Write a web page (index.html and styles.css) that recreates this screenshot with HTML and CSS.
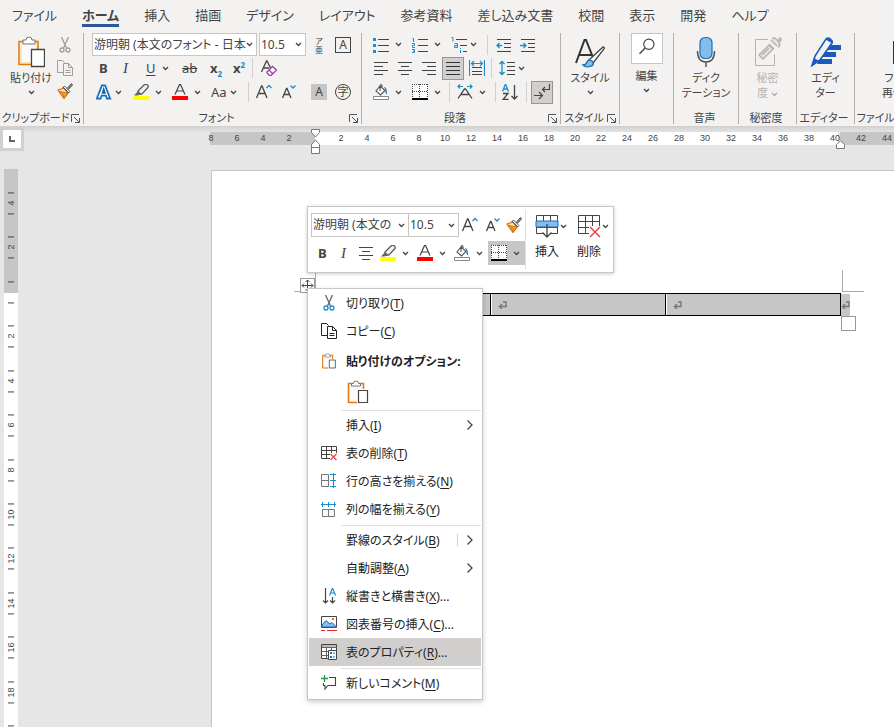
FILE: index.html
```html
<!DOCTYPE html>
<html lang="ja">
<head>
    <meta charset="UTF-8">
    <meta name="viewport" content="width=device-width, initial-scale=1.0">
    <title>文書 - 表のプロパティ</title>
    <link rel="stylesheet" href="styles.css">
</head>
<body>
    <!-- アイコン定義 -->
    <svg class="defs" width="0" height="0" aria-hidden="true">
        <symbol id="chev" viewBox="0 0 7 5"><path d="M1 1l2.500 2.500L6 1" fill="none" stroke="#444" stroke-width="1.300"/></symbol>
        <symbol id="arrow" viewBox="0 0 8 12"><path d="M1.500 1.500L6 6l-4.500 4.500" fill="none" stroke="#444" stroke-width="1.300"/></symbol>
        <symbol id="launch" viewBox="0 0 9 9"><path d="M.5 8V.5H8M3 3l5 5M8.500 4v4.500H4" fill="none" stroke="#555"/></symbol>
        <symbol id="cut" viewBox="0 0 16 16"><path d="M4.500 0l5 11M11.500 0l-5 11" fill="none" stroke="currentColor" stroke-width="1.300"/><circle class="ring" cx="5" cy="13" r="2"/><circle class="ring" cx="11" cy="13" r="2"/></symbol>
        <symbol id="copy" viewBox="0 0 16 16"><path d="M6 12.500H.5V.5h5l2 2M6.500 3.500h5l4 4v8h-9zM11.500 3.500v4h4M8.500 10.500h5M8.500 12.500h5" fill="none" stroke="currentColor"/></symbol>
        <symbol id="brush" viewBox="0 0 16 16"><path d="M1 7l6-2 4 5-4 5.500z" fill="#fbe3b5" stroke="#d9720f" stroke-width="1.300"/><path d="M2 8.500l3 1 2 5.500 4-5z" fill="#f59b2e" stroke="#d9720f"/><path d="M6 4l6 6M7.500 3l5.500 5.500-1.500 1.500L6 4.500z" fill="#fff" stroke="#555"/><path d="M10 5.500l4.500-5 1.200 1.200-4.500 5" fill="#888" stroke="#555"/></symbol>
        <symbol id="marker" viewBox="0 0 16 16"><path d="M5 7l6-6q2-1.500 3.500 0t0 3L9 10l-4 .500z" fill="#eee" stroke="#555" stroke-width="1.200"/><path d="M5 7l4 3-5 1.500H1z" fill="#666"/><path d="M0 12h16v4H0z" fill="#ff0"/></symbol>
        <symbol id="fontcolor" viewBox="0 0 16 16"><path d="M3 10.500L7.500.500h1l4.500 10M4.500 7h7" fill="none" stroke="#444" stroke-width="1.200"/><path d="M0 12h16v4H0z" fill="red"/></symbol>
        <symbol id="bucket" viewBox="0 0 16 16"><path d="M7 2l5 4.500L7.500 11 3 7zM7 7V1.500q1-2 2 0V3" fill="#fff" stroke="#555" stroke-width="1.100"/><path d="M11 3q3 0 3 7-2 0-1.500-4z" fill="#1e6fb8"/><path d="M.5 12.500h15v3H.5z" fill="#fff" stroke="#888"/></symbol>
        <symbol id="borders" viewBox="0 0 16 16"><path d="M0 0h16v16H0z" fill="#fff"/><path d="M0 .500h16M0 7.500h16M.500 0v14M7.500 0v14M15.500 0v14" fill="none" stroke="#444" stroke-dasharray="1 1"/><path d="M0 15h16" stroke="#000" stroke-width="2"/></symbol>
        <symbol id="grow" viewBox="0 0 16 16"><path d="M.5 14L5.500 2h.500l5 12M2.500 9.500h7" fill="none" stroke="#444" stroke-width="1.300"/><path d="M10.500 4l2.500-2.500L15.500 4" fill="none" stroke="#1e8bcd" stroke-width="1.300"/></symbol>
        <symbol id="shrink" viewBox="0 0 16 16"><path d="M1.500 14L5.500 4.500h.500l4 9.500M3 10.500h6" fill="none" stroke="#444" stroke-width="1.300"/><path d="M9.500 1.500L12 4l2.500-2.500" fill="none" stroke="#1e8bcd" stroke-width="1.300"/></symbol>
        <symbol id="center" viewBox="0 0 16 16"><path d="M1 2.500h14M4 6.500h8M1 10.500h14M4 14.500h8" stroke="#444"/></symbol>
        <symbol id="paste" viewBox="0 0 28 32"><path d="M2 5.500h19v23H2z" fill="#fde6b8" stroke="#e07b14" stroke-width="1.500"/><path d="M5 8h14v18H5z" fill="#fafafa"/><path d="M6 8V4h3q0-3 3-3t3 3h3v4z" fill="#fff" stroke="#777"/><path d="M14.500 13.500h13v17h-13z" fill="#fff" stroke="#444" stroke-width="1.300"/></symbol>
        <symbol id="paste-sm" viewBox="0 0 22 24"><path d="M1.500 3.500h15v19h-15z" fill="#fafafa" stroke="#e07b14" stroke-width="1.600"/><path d="M4.500 6V3.500h2q0-2.500 2.500-2.500t2.500 2.500h2V6z" fill="#fff" stroke="#777"/><path d="M10 9h12v15H10z" fill="#fff"/><path d="M11.500 10.500h9v12h-9z" fill="#fff" stroke="#444" stroke-width="1.200"/></symbol>
        <symbol id="ret" viewBox="0 0 9 8"><path d="M5 1h3v4.500H2M4 3L1.500 5.500 4 8" fill="none" stroke="#777" stroke-width="1.400"/></symbol>
    </svg>

    <header class="ribbon">
        <nav class="tabs">
            <a href="#">ファイル</a>
            <a href="#" class="active">ホーム</a>
            <a href="#">挿入</a>
            <a href="#">描画</a>
            <a href="#">デザイン</a>
            <a href="#">レイアウト</a>
            <a href="#">参考資料</a>
            <a href="#">差し込み文書</a>
            <a href="#">校閲</a>
            <a href="#">表示</a>
            <a href="#">開発</a>
            <a href="#">ヘルプ</a>
        </nav>

        <div class="groups">
            <!-- クリップボード -->
            <section class="group clipboard">
                <div class="group-body clip-body">
                    <button class="big"><svg width="28" height="32"><use href="#paste"/></svg><span>貼り付け</span><svg class="chev"><use href="#chev"/></svg></button>
                    <div class="clip-tools">
                        <button class="muted" aria-label="切り取り"><svg class="icon"><use href="#cut"/></svg></button>
                        <button class="muted" aria-label="コピー"><svg class="icon"><use href="#copy"/></svg></button>
                        <button aria-label="書式のコピー"><svg class="icon"><use href="#brush"/></svg></button>
                    </div>
                </div>
                <div class="group-label"><span>クリップボード</span><svg class="launch"><use href="#launch"/></svg></div>
            </section>

            <!-- フォント -->
            <section class="group font">
                <div class="group-body">
                    <div class="row row-top font-row1">
                        <div class="combo">
                            <select aria-label="フォント"><option>游明朝 (本文のフォント - 日本</option></select>
                            <svg class="chev"><use href="#chev"/></svg>
                        </div>
                        <div class="combo">
                            <select aria-label="フォント サイズ"><option>10.5</option></select>
                            <svg class="chev"><use href="#chev"/></svg>
                        </div>
                        <button class="ruby" aria-label="ルビ"><span>ア</span><span>亜</span></button>
                        <button class="boxed" aria-label="囲み線">A</button>
                    </div>
                    <div class="row font-row2">
                        <button class="char bold">B</button>
                        <button class="char italic">I</button>
                        <button class="split wide"><span class="char under">U</span><svg class="chev"><use href="#chev"/></svg></button>
                        <button class="char strike">ab</button>
                        <button class="char bold">x<sub>2</sub></button>
                        <button class="char bold">x<sup>2</sup></button>
                        <i class="vline"></i>
                        <button aria-label="書式のクリア"><svg class="icon" viewBox="0 0 16 16"><path d="M.5 12L5.500 1H6l4 8M2.500 8H8" fill="none" stroke="#444" stroke-width="1.300"/><path d="M6 12l5.500-5.500 4 3.500L10 15.500H8.500L6 13zM8 10l4 4" fill="#fff" stroke="#9b3fa8" stroke-width="1.300"/></svg></button>
                    </div>
                    <div class="row font-row3">
                        <button class="split"><svg class="icon" viewBox="0 0 16 16"><path d="M1 14.500L6 1.500h3L14 14.500h-3l-1-3H5.500l-1 3zM6.500 9h2.500L7.700 5z" fill="#fff" stroke="#a5d1f0" stroke-width="3"/><path d="M1 14.500L6 1.500h3L14 14.500h-3l-1-3H5.500l-1 3zM6.500 9h2.500L7.700 5z" fill="#fff" stroke="#1664ae" stroke-width="1.500"/></svg><svg class="chev"><use href="#chev"/></svg></button>
                        <button class="split wide"><svg class="icon"><use href="#marker"/></svg><svg class="chev"><use href="#chev"/></svg></button>
                        <button class="split wide"><svg class="icon"><use href="#fontcolor"/></svg><svg class="chev"><use href="#chev"/></svg></button>
                        <button class="split"><span class="char">Aa</span><svg class="chev"><use href="#chev"/></svg></button>
                        <i class="vline"></i>
                        <button aria-label="フォントの拡大"><svg class="icon"><use href="#grow"/></svg></button>
                        <button aria-label="フォントの縮小"><svg class="icon"><use href="#shrink"/></svg></button>
                        <button class="shaded">A</button>
                        <button class="circled">字</button>
                    </div>
                </div>
                <div class="group-label"><span>フォント</span><svg class="launch"><use href="#launch"/></svg></div>
            </section>

            <!-- 段落 -->
            <section class="group para">
                <div class="group-body">
                    <div class="row row-top para-row1">
                        <button class="split wide"><svg class="icon" viewBox="0 0 16 16"><path d="M0 1h3v3H0zM0 7h3v3H0zM0 13h3v3H0z" fill="#1e8bcd"/><path d="M5 2.500h11M5 8.500h11M5 14.500h11" stroke="#444"/></svg><svg class="chev"><use href="#chev"/></svg></button>
                        <button class="split wide"><svg class="icon" viewBox="0 0 16 16"><path d="M6 2.500h10M6 8.500h10M6 14.500h10" stroke="#444"/><path d="M.5 1.500h1v3.500M0 6.500h2.500v2H.500v2H3M0 12.500h2.500v3H0M1 14h1.500" fill="none" stroke="#1e8bcd"/></svg><svg class="chev"><use href="#chev"/></svg></button>
                        <button class="split"><svg class="icon" viewBox="0 0 16 16"><path d="M5 2.500h11M9 8.500h7M12 14.500h4" stroke="#444"/><path d="M.5.500h1.500v4M3.500 6.500h3v4h-3v-2h3M9.500 11v1M9.500 13v3" fill="none" stroke="#1e8bcd"/></svg><svg class="chev"><use href="#chev"/></svg></button>
                        <i class="vline"></i>
                        <button aria-label="インデントを減らす"><svg class="icon" viewBox="0 0 16 16"><path d="M1 2.500h14M8 6.500h7M8 10.500h7M1 14.500h14" stroke="#444"/><path d="M6 8.500H1M3.500 6L1 8.500 3.500 11" fill="none" stroke="#1e8bcd" stroke-width="1.300"/></svg></button>
                        <button aria-label="インデントを増やす"><svg class="icon" viewBox="0 0 16 16"><path d="M1 2.500h14M8 6.500h7M8 10.500h7M1 14.500h14" stroke="#444"/><path d="M0 8.500h6M3.500 6L6 8.500 3.500 11" fill="none" stroke="#1e8bcd" stroke-width="1.300"/></svg></button>
                    </div>
                    <div class="row para-row2">
                        <button aria-label="左揃え"><svg class="icon" viewBox="0 0 16 16"><path d="M1 2.500h14M1 6.500h9M1 10.500h14M1 14.500h9" stroke="#444"/></svg></button>
                        <button aria-label="中央揃え"><svg class="icon"><use href="#center"/></svg></button>
                        <button aria-label="右揃え"><svg class="icon" viewBox="0 0 16 16"><path d="M1 2.500h14M6 6.500h9M1 10.500h14M6 14.500h9" stroke="#444"/></svg></button>
                        <button class="pressed" aria-label="両端揃え"><svg class="icon" viewBox="0 0 16 16"><path d="M1 2.500h14M1 6.500h14M1 10.500h14M1 14.500h14" stroke="#333"/></svg></button>
                        <button aria-label="均等割り付け"><svg class="icon" viewBox="0 0 16 16"><path d="M.5 0v16M15.500 0v16M2 3.500h12M5 1L2.500 3.500 5 6M11 1l2.500 2.500L11 6" fill="none" stroke="#1e8bcd" stroke-width="1.200"/><path d="M3 7.500h10M3 11.500h10M3 14.500h10" stroke="#444"/></svg></button>
                        <i class="vline"></i>
                        <button class="split"><svg class="icon" viewBox="0 0 16 16"><path d="M3 1v14M.5 4L3 1.500 5.500 4M.5 12L3 14.500 5.500 12" fill="none" stroke="#1e8bcd" stroke-width="1.300"/><path d="M8 2.500h8M8 6.500h8M8 10.500h8M8 14.500h8" stroke="#444"/></svg><svg class="chev"><use href="#chev"/></svg></button>
                    </div>
                    <div class="row para-row3">
                        <button class="split wide"><svg class="icon"><use href="#bucket"/></svg><svg class="chev"><use href="#chev"/></svg></button>
                        <button class="split wide"><svg class="icon"><use href="#borders"/></svg><svg class="chev"><use href="#chev"/></svg></button>
                        <i class="vline"></i>
                        <button class="split wide"><svg class="icon" viewBox="0 0 16 16"><path d="M1 14.500L7.500 5h1L15 14.500M4 10.500h8" fill="none" stroke="#444" stroke-width="1.300"/><path d="M6 2.500H1M3 .500l-2 2 2 2M10 2.500h5M13 .500l2 2-2 2" fill="none" stroke="#1e8bcd" stroke-width="1.200"/></svg><svg class="chev"><use href="#chev"/></svg></button>
                        <i class="vline"></i>
                        <button aria-label="並べ替え"><svg class="icon" viewBox="0 0 16 16"><path d="M.5 7.500L3.300.500h.400L6.500 7.500M1.500 5h4" fill="none" stroke="#1e8bcd" stroke-width="1.300"/><path d="M1 9.500h5L1 15.500h5.500M12.500 1v14M9.500 12l3 3 3-3" fill="none" stroke="#444" stroke-width="1.300"/></svg></button>
                        <i class="vline"></i>
                        <button class="pressed" aria-label="編集記号の表示"><svg class="icon" viewBox="0 0 16 16"><path d="M15.500 0v5.500H9M11 3L8.500 5.500 11 8M0 11.500h8M5 8l3.500 3.500L5 15" fill="none" stroke="#444" stroke-width="1.200"/></svg></button>
                    </div>
                </div>
                <div class="group-label"><span>段落</span><svg class="launch"><use href="#launch"/></svg></div>
            </section>

            <!-- スタイル -->
            <section class="group style">
                <div class="group-body">
                    <button class="big"><svg width="30" height="32" viewBox="0 0 30 32"><path d="M1 27L9.500 4h1.500l8 20M4.500 19h13" fill="none" stroke="#333" stroke-width="2"/><path d="M14 24L28 11q2 0 1 2L18 27z" fill="#fff" stroke="#444" stroke-width="1.300"/><path d="M8 29q3 0 4-3t5-1q3 4-1 5-5 2-8-1z" fill="#83bdec" stroke="#1e6fb8" stroke-width="1.300"/></svg><span>スタイル</span><svg class="chev"><use href="#chev"/></svg></button>
                </div>
                <div class="group-label"><span>スタイル</span><svg class="launch"><use href="#launch"/></svg></div>
            </section>

            <!-- 編集 -->
            <section class="group edit">
                <div class="group-body">
                    <button class="big"><svg class="edit-icon" width="32" height="31" viewBox="0 0 32 31"><circle cx="18" cy="11" r="5.500" fill="none" stroke="#444" stroke-width="1.300"/><path d="M14 15l-6 6" stroke="#444" stroke-width="1.500"/></svg><span>編集</span><svg class="chev"><use href="#chev"/></svg></button>
                </div>
            </section>

            <!-- 音声 -->
            <section class="group voice">
                <div class="group-body">
                    <button class="big"><svg width="20" height="32" viewBox="0 0 20 32"><rect x="4" y="1.500" width="12" height="21" rx="5" fill="#83bdec" stroke="#1e6fb8" stroke-width="1.200"/><path d="M1.500 15q0 11 8.500 11t8.500-11M10 26v5" fill="none" stroke="#555" stroke-width="1.500"/></svg><span>ディク<br>テーション</span></button>
                </div>
                <div class="group-label"><span>音声</span></div>
            </section>

            <!-- 秘密度 -->
            <section class="group secret">
                <div class="group-body">
                    <button class="big" disabled><svg width="28" height="32" viewBox="0 0 28 32"><path d="M14 3.500H1.500v26h19V18" fill="none" stroke="#b5b3b1"/><path d="M5 19L15 9l4 4L9 23zM8 19l7-7M15 8l5 5M17 4l6 6M18 3q2-2 4 0l2 2 2-3 1.500 1.500-2.500 3q2 3-1 5" fill="#e8e6e4" stroke="#b5b3b1" stroke-width="1.500"/></svg><span>秘密<br>度 <svg class="chev dim"><use href="#chev"/></svg></span></button>
                </div>
                <div class="group-label"><span>秘密度</span></div>
            </section>

            <!-- エディター -->
            <section class="group editor">
                <div class="group-body">
                    <button class="big"><svg width="32" height="32" viewBox="0 0 32 32"><path d="M19 9h12v5H17zM15 16h11v5H12zM10 23h12v5H7z" fill="#185abd"/><path d="M2 29.500L5 20 16 3q2-2 4.500 0t1.500 4L10 24z" fill="#f3f2f1" stroke="#185abd" stroke-width="1.600"/><path d="M1.500 30.500L4 22l5 3zM15.500 3.500q2-2 5 0t2 4z" fill="#185abd"/></svg><span>エディ<br>ター</span></button>
                </div>
                <div class="group-label"><span>エディター</span></div>
            </section>

            <!-- ファイルの再使用 -->
            <section class="group reuse">
                <div class="group-body">
                    <button class="big"><svg width="32" height="32" viewBox="0 0 32 32"><path d="M1 6h12l7 6v15H1z" fill="#fff" stroke="#333" stroke-width="2"/></svg><span>ファイルを<br>再使用する</span></button>
                </div>
                <div class="group-label"><span>ファイルを再使用する</span></div>
            </section>
        </div>
    </header>

    <main class="workspace">
        <!-- 水平ルーラー -->
        <div class="top-strip">
            <button class="tab-stop" aria-label="左揃えタブ"><svg width="8" height="8" viewBox="0 0 8 8"><path d="M2 1v5h5" fill="none" stroke="#666" stroke-width="2"/></svg></button>
            <div class="hruler">
                <ol>
                    <li>8</li><li>6</li><li>4</li><li>2</li><li></li><li>2</li><li>4</li><li>6</li><li>8</li><li>10</li><li>12</li><li>14</li><li>16</li><li>18</li><li>20</li><li>22</li><li>24</li><li>26</li><li>28</li><li>30</li><li>32</li><li>34</li><li>36</li><li>38</li><li>40</li><li>42</li><li>44</li>
                </ol>
                <svg class="indent-left" width="9" height="26" viewBox="0 0 9 26"><path d="M.5.500h8v3L4.500 8l-4-4.500zM4.500 11l4 4.500v3h-8v-3zM.5 18.500h8v6h-8z" fill="#fff" stroke="#777"/></svg>
                <svg class="indent-right" width="9" height="9" viewBox="0 0 9 9"><path d="M4.500.800l4 3.700v4h-8v-4z" fill="#fff" stroke="#777"/></svg>
            </div>
        </div>

        <div class="canvas">
            <!-- 垂直ルーラー -->
            <div class="vruler">
                <ol>
                    <li>4</li><li>2</li><li></li><li>2</li><li>4</li><li>6</li><li>8</li><li>10</li><li>12</li><li>14</li><li>16</li><li>18</li><li></li><li></li>
                </ol>
            </div>

            <div class="page">
                <i class="corner corner-left"></i>
                <i class="corner corner-right"></i>
                <div class="table-line">
                    <table class="doc-table">
                        <tr>
                            <td><svg class="ret"><use href="#ret"/></svg></td>
                            <td><svg class="ret"><use href="#ret"/></svg></td>
                            <td><svg class="ret"><use href="#ret"/></svg></td>
                        </tr>
                    </table>
                    <span class="row-end"><svg class="ret"><use href="#ret"/></svg></span>
                    <i class="resize-handle"></i>
                </div>
                <svg class="move-handle" width="15" height="15" viewBox="0 0 15 15"><path d="M.5.500h14v14H.5z" fill="#fff" stroke="#999"/><path d="M7.500 2v11M2 7.500h11M5.500 4l2-2 2 2M5.500 11l2 2 2-2M4 5.500l-2 2 2 2M11 5.500l2 2-2 2" fill="none" stroke="#444"/></svg>

                <!-- ミニ ツールバー -->
                <div class="mini-bar">
                    <div class="mini-main">
                        <div class="mini-row mini-row1">
                            <div class="combo">
                                <select aria-label="フォント"><option>游明朝 (本文の</option></select>
                                <svg class="chev"><use href="#chev"/></svg>
                            </div>
                            <div class="combo">
                                <select aria-label="フォント サイズ"><option>10.5</option></select>
                                <svg class="chev"><use href="#chev"/></svg>
                            </div>
                            <button aria-label="フォントの拡大"><svg class="icon"><use href="#grow"/></svg></button>
                            <button aria-label="フォントの縮小"><svg class="icon"><use href="#shrink"/></svg></button>
                            <button aria-label="書式のコピー"><svg class="icon"><use href="#brush"/></svg></button>
                        </div>
                        <div class="mini-row mini-row2">
                            <button class="char bold">B</button>
                            <button class="char italic">I</button>
                            <button aria-label="中央揃え"><svg class="icon"><use href="#center"/></svg></button>
                            <button class="split wide"><svg class="icon"><use href="#marker"/></svg><svg class="chev"><use href="#chev"/></svg></button>
                            <button class="split wide"><svg class="icon"><use href="#fontcolor"/></svg><svg class="chev"><use href="#chev"/></svg></button>
                            <button class="split wide"><svg class="icon"><use href="#bucket"/></svg><svg class="chev"><use href="#chev"/></svg></button>
                            <button class="split wide hot"><svg class="icon"><use href="#borders"/></svg><svg class="chev"><use href="#chev"/></svg></button>
                        </div>
                    </div>
                    <div class="mini-side">
                        <button><span class="mini-pic"><svg width="24" height="24" viewBox="0 0 24 24"><path d="M1.500 1.500h21v18h-21zM1.500 7.500h21M1.500 13.500h21M8.500 1.500v18M15.500 1.500v18" fill="#fff" stroke="#444"/><path d="M1 7h22v6H1z" fill="#83bdec" stroke="#1e6fb8"/><path d="M8 14h8v9H8z" fill="#fff"/><path d="M12 10v13M7.500 18.500L12 23l4.500-4.500" fill="none" stroke="#444" stroke-width="1.300"/></svg><svg class="chev"><use href="#chev"/></svg></span><span>挿入</span></button>
                        <button><span class="mini-pic"><svg width="24" height="24" viewBox="0 0 24 24"><path d="M1.500 1.500h21v18h-21zM1.500 7.500h21M1.500 13.500h21M8.500 1.500v18M15.500 1.500v18" fill="#fff" stroke="#444"/><path d="M12 12h12v12H12z" fill="#fff"/><path d="M13 13l10 10M23 13L13 23" stroke="#e8484d" stroke-width="1.500"/></svg><svg class="chev"><use href="#chev"/></svg></span><span>削除</span></button>
                    </div>
                </div>

                <!-- コンテキスト メニュー -->
                <div class="menu">
                    <button class="item"><svg class="icon blue-ring"><use href="#cut"/></svg><span>切り取り(<u>T</u>)</span></button>
                    <button class="item"><svg class="icon"><use href="#copy"/></svg><span>コピー(<u>C</u>)</span></button>
                    <div class="item heading"><svg class="icon"><use href="#paste-sm"/></svg><span>貼り付けのオプション:</span></div>
                    <div class="paste-options"><button aria-label="貼り付け"><svg width="22" height="24"><use href="#paste-sm"/></svg></button></div>
                    <hr>
                    <button class="item"><i class="icon"></i><span>挿入(<u>I</u>)</span><svg class="arrow"><use href="#arrow"/></svg></button>
                    <button class="item"><svg class="icon" viewBox="0 0 16 16"><path d="M.5 1.500h15v12H.5zM.500 5.500h15M.500 9.500h15M5.500 1.500v12M10.500 1.500v12" fill="#fff" stroke="#444"/><path d="M9 8h7v8H9z" fill="#fff"/><path d="M9.500 9l6 6M15.500 9l-6 6" stroke="#e8484d" stroke-width="1.300"/></svg><span>表の削除(<u>T</u>)</span></button>
                    <button class="item"><svg class="icon" viewBox="0 0 16 16"><path d="M.5 1.500h7v12h-7zM.500 7.500h7" fill="#fafafa" stroke="#777"/><path d="M12.500 0v15M9 1.500h6M9 7.500h6M9 13.500h6" stroke="#1e8bcd"/></svg><span>行の高さを揃える(<u>N</u>)</span></button>
                    <button class="item"><svg class="icon" viewBox="0 0 16 16"><path d="M1.500 8.500h12v7h-12zM7.500 8.500v7" fill="#fafafa" stroke="#777"/><path d="M0 3.500h15M1.500 1v5M7.500 1v5M13.500 1v5" stroke="#1e8bcd"/></svg><span>列の幅を揃える(<u>Y</u>)</span></button>
                    <hr>
                    <button class="item"><i class="icon"></i><span>罫線のスタイル(<u>B</u>)</span><svg class="arrow divided"><use href="#arrow"/></svg></button>
                    <button class="item"><i class="icon"></i><span>自動調整(<u>A</u>)</span><svg class="arrow"><use href="#arrow"/></svg></button>
                    <button class="item"><svg class="icon" viewBox="0 0 16 16"><path d="M4.500 0v15M2 12.500L4.500 15 7 12.500M11.500 9v6M9 12.500l2.500 2.500 2.500-2.500" fill="none" stroke="#444" stroke-width="1.200"/><path d="M8.500 7.500l2.800-7h.400l2.800 7M9.500 5h4" fill="none" stroke="#1e8bcd" stroke-width="1.200"/></svg><span>縦書きと横書き(<u>X</u>)...</span></button>
                    <button class="item"><svg class="icon" viewBox="0 0 16 16"><path d="M.5.500h15v11H.5z" fill="#fff" stroke="#444"/><path d="M1 9l4-4.500L9 8l2-1.500 4 4V11H1z" fill="#83bdec" stroke="#1e6fb8"/><path d="M11 2h2v2h-2z" fill="#e07b14"/><path d="M0 14.500h4M6 14.500h10" stroke="#e8282d"/></svg><span>図表番号の挿入(<u>C</u>)...</span></button>
                    <button class="item selected"><svg class="icon" viewBox="0 0 16 16"><path d="M.5.500h15v14H.5z" fill="#fff" stroke="#444"/><path d="M1 1h14v2H1z" fill="#bbb"/><path d="M.5 3.500h15M.5 7.500H7M.5 11.500H7M5.500 3.500v11M10.500 3.500v4" stroke="#666"/><path d="M7.500 6.500h8v9h-8z" fill="#fff" stroke="#444"/><path d="M9 8h2v2H9zM9 12h2v2H9zM12 8.500h2v1h-2zM12 12.500h2v1h-2z" fill="#1e6fb8"/></svg><span>表のプロパティ(<u>R</u>)...</span></button>
                    <hr>
                    <button class="item"><svg class="icon" viewBox="0 0 16 16"><path d="M8 2.500h6.500v8H7L4 14v-3.500H2.500V8" fill="none" stroke="#444" stroke-width="1.100"/><path d="M3.500 0v7M0 3.500h7" stroke="#1b9e4b" stroke-width="1.300"/></svg><span>新しいコメント(<u>M</u>)</span></button>
                </div>
            </div>
        </div>
    </main>
</body>
</html>
```

FILE: styles.css
```css
* {
    box-sizing: border-box;
}
body {
    margin: 0;
    min-height: 100vh;
    display: flex;
    flex-direction: column;
    overflow: hidden;
    font-family: "Noto Sans", "Noto Sans CJK JP", sans-serif;
    font-feature-settings: "palt";
    font-size: 12px;
    line-height: 16px;
    color: #444;
    background-color: #e6e6e6;
}
.defs {
    position: absolute;
}
svg {
    display: block;
    flex: none;
}
button {
    margin: 0;
    padding: 0;
    border: none;
    background: none;
    font: inherit;
    font-feature-settings: inherit;
    color: inherit;
    white-space: nowrap;
}
.icon {
    width: 16px;
    height: 16px;
    flex: none;
}
.chev {
    width: 7px;
    height: 5px;
}

/* リボン */
.ribbon {
    overflow: hidden;
    padding-bottom: 2px;
    border-bottom: 1px solid #d2d0ce;
    background-color: #f3f2f1;
}
.tabs {
    display: flex;
    gap: 25px;
    height: 33px;
    padding-left: 12px;
    font-size: 13px;
    line-height: 16px;
}
.tabs a {
    height: 27px;
    padding-top: 7px;
    color: #444;
    text-decoration: none;
    white-space: nowrap;
}
.tabs .active {
    border-bottom: 3px solid #2b579a;
    font-weight: bold;
}
.groups {
    display: flex;
}
.group {
    flex: none;
    display: flex;
    flex-direction: column;
    height: 91px;
    border-right: 1px solid #b3b0ad;
}
.group-body {
    height: 79px;
}
.group-label {
    display: flex;
    align-items: center;
    padding-right: 3px;
    font-size: 11px;
    line-height: 12px;
    white-space: nowrap;
}
.group-label span {
    flex: 1;
    text-align: center;
}
.launch {
    width: 9px;
    height: 9px;
}
.clipboard { width: 84px; }
.font { width: 278px; }
.para { width: 199px; }
.style { width: 59px; }
.edit { width: 54px; }
.voice { width: 65px; }
.secret { width: 58px; }
.editor { width: 58px; }
.reuse { width: 108px; }

.big {
    display: flex;
    flex-direction: column;
    align-items: center;
    width: 100%;
    padding-top: 3px;
    text-align: center;
}
.big > .chev {
    margin-top: 5px;
}
.big > span {
    font-size: 11px;
    line-height: 15px;
    padding-top: 2px;
}
.big:disabled {
    color: #b5b3b1;
}
.big .dim {
    display: inline-block;
    opacity: 0.4;
}
.edit .big {
    padding-top: 0;
}
.edit-icon {
    margin-bottom: 2px;
    border: 1px solid #c8c6c4;
    background-color: #fff;
}
.clip-body {
    display: flex;
}
.clip-body .big {
    width: 57px;
    padding-left: 5px;
}
.clip-tools {
    display: flex;
    flex-direction: column;
    gap: 7px;
    padding-top: 4px;
}
.muted {
    color: #a19f9d;
}
.ring {
    fill: none;
    stroke: var(--ring, currentColor);
    stroke-width: 1.3px;
}
.blue-ring {
    --ring: #1e8bcd;
    color: #666;
}

.row {
    display: grid;
    height: 24px;
    align-items: center;
    justify-items: start;
}
.row-top {
    height: 23px;
}
.font-row1 {
    grid-template-columns: 167px 52px 24px 16px;
    padding-left: 8px;
}
.font-row2 {
    grid-template-columns: 24px 23px 36px 28px 23px 19px 9px 16px;
    padding-left: 15px;
}
.font-row3 {
    grid-template-columns: 37px 39px 39px 37px 8px 25px 30px 24px 16px;
    padding-left: 12px;
}
.para-row1 {
    grid-template-columns: 39px 39px 36px 9px 24px 16px;
    padding-left: 11px;
}
.para-row2 {
    grid-template-columns: 24px 24px 21px 27px 22px 8px 30px;
    padding-left: 11px;
}
.para-row3 {
    grid-template-columns: 39px 37px 8px 38px 7px 24px 5px 22px;
    padding-left: 11px;
}
.vline {
    width: 1px;
    height: 20px;
    background-color: #d2d0ce;
}
.split {
    display: flex;
    align-items: center;
    gap: 3px;
}
.split.wide {
    gap: 6px;
}
.combo {
    display: grid;
    align-items: center;
    justify-items: end;
    height: 23px;
    border: 1px solid #c8c6c4;
    background-color: #fff;
}
.combo select {
    grid-area: 1 / 1;
    width: 100%;
    padding: 0 10px 0 1px;
    appearance: none;
    border: none;
    background: none;
    font: inherit;
    font-feature-settings: inherit;
    color: #444;
}
.combo .chev {
    grid-area: 1 / 1;
    margin-right: 3px;
    pointer-events: none;
}
.font-row1 .combo:nth-child(1) { width: 165px; }
.font-row1 .combo:nth-child(2) { width: 47px; }

.char {
    font-size: 13px;
    line-height: 16px;
}
.bold {
    font-weight: bold;
}
.italic {
    font-family: "Liberation Serif", serif;
    font-size: 15px;
    font-style: italic;
}
.under {
    text-decoration: underline;
    text-underline-offset: 2px;
}
.strike {
    text-decoration: line-through;
}
.char sub,
.char sup {
    font-size: 8px;
    line-height: 0;
    color: #1e8bcd;
}
.ruby {
    display: flex;
    flex-direction: column;
    align-items: center;
    width: 16px;
    font-size: 8px;
    line-height: 9px;
}
.boxed,
.shaded,
.circled {
    width: 16px;
    height: 16px;
    line-height: 14px;
    text-align: center;
}
.boxed {
    border: 1px solid #444;
}
.shaded {
    background-color: #c8c6c4;
    line-height: 16px;
}
.circled {
    border: 1px solid #444;
    border-radius: 50%;
    font-size: 11px;
}
.pressed {
    display: grid;
    place-items: center;
    width: 22px;
    height: 23px;
    border: 1px solid #979593;
    background-color: #d2d0ce;
}

/* ルーラー */
.workspace {
    flex: 1;
    display: flex;
    flex-direction: column;
    overflow: hidden;
}
.top-strip {
    display: flex;
    align-items: flex-start;
    height: 43px;
    background: linear-gradient(#d4d4d4, #e6e6e6 6px);
}
.tab-stop {
    display: grid;
    place-items: center;
    width: 24px;
    height: 24px;
    margin-right: 186px;
    border: 3px solid #d0d0d0;
    background-color: #fff;
    flex: none;
}
.hruler {
    position: relative;
    flex: 1;
    height: 13px;
    margin-top: 5px;
    background: linear-gradient(to right, #c6c6c6 105px, #fff 105px 628px, #e6e6e6 628px 630px, #c6c6c6 630px);
}
.hruler ol,
.vruler ol {
    margin: 0;
    padding: 0;
    list-style: none;
    font-family: "Liberation Sans", sans-serif;
    font-size: 9px;
}
.hruler ol {
    display: flex;
    margin-left: -12px;
    line-height: 13px;
}
.hruler li {
    flex: none;
    width: 26px;
    text-align: center;
}
.indent-left {
    position: absolute;
    left: 101px;
    top: -3px;
}
.indent-right {
    position: absolute;
    left: 626px;
    top: 8px;
}
.canvas {
    flex: 1;
    display: flex;
    min-height: 0;
}
.vruler {
    flex: none;
    width: 14px;
    height: 558px;
    margin: -1px 193px 0 4px;
    padding-top: 12px;
    overflow: hidden;
    background: linear-gradient(#c6c6c6 124px, #fff 124px);
}
.vruler ol {
    display: grid;
    grid-auto-rows: 1fr;
    height: 622px;
}
.vruler li {
    display: flex;
    align-items: center;
    justify-content: space-between;
    padding: 11px 0;
    writing-mode: vertical-rl;
    transform: rotate(180deg);
    line-height: 14px;
}
.vruler li::before,
.vruler li::after {
    content: "";
    width: 6px;
    height: 1px;
    background-color: #444;
}

/* ページ */
.page {
    position: relative;
    flex: 1;
    padding: 122px 0 0 103px;
    border: solid #c6c6c6;
    border-width: 1px 0 0 1px;
    background-color: #fff;
}
.table-line {
    display: flex;
    align-items: flex-start;
}
.doc-table {
    width: 526px;
    table-layout: fixed;
    border-collapse: collapse;
    flex: none;
}
.doc-table td {
    height: 22px;
    padding: 0 0 0 7px;
    border: 1px solid #000;
    background-color: #c6c6c6;
    box-shadow: inset 1px 0 #fff;
}
.ret {
    width: 9px;
    height: 8px;
}
.row-end {
    display: grid;
    place-items: center;
    width: 9px;
    height: 22px;
    margin-top: 1px;
    background-color: #c6c6c6;
}
.resize-handle {
    width: 15px;
    height: 15px;
    margin: 23px 0 0 -9px;
    border: 1px solid #999;
    background-color: #fff;
}
.corner {
    position: absolute;
    width: 22px;
    height: 22px;
    border: solid #aaa;
}
.corner-left {
    left: 82px;
    top: 99px;
    border-width: 0 1px 1px 0;
}
.corner-right {
    left: 630px;
    top: 99px;
    border-width: 0 0 1px 1px;
}
.move-handle {
    position: absolute;
    left: 88px;
    top: 107px;
}

/* ミニ ツールバー */
.mini-bar {
    position: absolute;
    left: 95px;
    top: 35px;
    display: flex;
    padding: 3px 2px 3px 3px;
    border: 1px solid #c8c6c4;
    background-color: #fff;
    box-shadow: 0 1px 4px rgba(0, 0, 0, 0.2);
}
.mini-main {
    padding: 3px 0 4px;
    border-right: 1px solid #e1dfdd;
}
.mini-row {
    display: grid;
    align-items: center;
    justify-items: start;
}
.mini-row1 {
    grid-template-columns: 97px 54px 23px 21px 19px;
}
.mini-row2 {
    grid-template-columns: 23px 17px 22px 37px 37px 34px 37px;
    padding: 4px 0 0 7px;
}
.mini-row1 .combo { width: 98px; height: 24px; }
.mini-row1 .combo:nth-child(2) { width: 51px; }
.hot {
    height: 24px;
    width: 37px;
    padding-left: 3px;
    background-color: #c8c6c4;
}
.mini-side {
    display: flex;
    gap: 10px;
    padding: 4px 2px 0 9px;
}
.mini-side button {
    display: flex;
    flex-direction: column;
    align-items: flex-start;
    gap: 6px;
    color: #222;
}
.mini-pic {
    display: flex;
    align-items: center;
    gap: 1px;
}

/* コンテキスト メニュー */
.menu {
    position: absolute;
    left: 95px;
    top: 117px;
    width: 176px;
    padding: 0 1px 2px;
    border: 1px solid #c6c6c6;
    background-color: #fff;
    color: #222;
    box-shadow: 0 2px 5px rgba(0, 0, 0, 0.2);
}
.menu .item {
    display: flex;
    align-items: center;
    gap: 9px;
    width: 100%;
    height: 28px;
    padding: 0 7px 0 12px;
    text-align: left;
    white-space: nowrap;
}
.menu .heading {
    height: 31px;
    font-weight: bold;
}
.menu .item span {
    flex: 1;
    padding-top: 2px;
}
.menu .selected {
    background-color: #d0cfce;
}
.menu u {
    text-underline-offset: 2px;
}
.paste-options {
    height: 32px;
    padding: 4px 0 0 38px;
}
.menu hr {
    height: 1px;
    margin: 2px 0 0 32px;
    border: none;
    background-color: #e1dfdd;
}
.arrow {
    width: 8px;
    height: 12px;
}
.divided {
    width: 17px;
    padding-left: 8px;
    border-left: 1px solid #d2d0ce;
}
```
